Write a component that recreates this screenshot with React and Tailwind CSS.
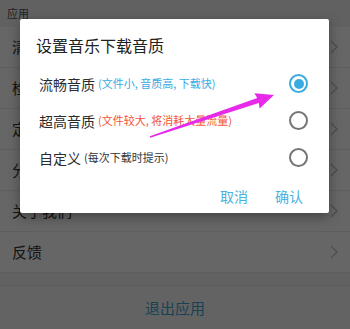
import React from "react";

const rows = ["清除缓存", "检查更新", "定时关闭", "分享应用", "关于我们", "反馈"];

function Chevron() {
  return (
    <svg width="8" height="14" viewBox="0 0 8 14" fill="none">
      <path d="M1 1l6 6-6 6" stroke="#bdbdbd" strokeWidth="1.2" />
    </svg>
  );
}

function Radio({ checked }) {
  return checked ? (
    <div className="w-[19px] h-[19px] rounded-full border-2 border-[#3aaae2] flex items-center justify-center">
      <div className="w-[10px] h-[10px] rounded-full bg-[#3aaae2]" />
    </div>
  ) : (
    <div className="w-[19px] h-[19px] rounded-full border-2 border-[#757575]" />
  );
}

function Option({ label, note, noteColor, checked }) {
  return (
    <div className="h-[37px] flex items-center pl-[19px] pr-[21px]">
      <span className="text-[14px] text-[#2b2b2b] leading-none">{label}</span>
      <span className={"ml-[3px] text-[11px] leading-none " + noteColor}>{note}</span>
      <div className="ml-auto">
        <Radio checked={checked} />
      </div>
    </div>
  );
}

export default function App() {
  return (
    <div
      className="relative w-[350px] h-[329px] overflow-hidden bg-[#f3f3f3]"
      style={{ fontFamily: '"Noto Sans CJK SC", "Noto Sans", sans-serif' }}
    >
      <div className="h-[27px] flex items-center pl-[7px] text-[11px] text-[#555]">应用</div>
      <div className="bg-white">
        {rows.map((r) => (
          <div
            key={r}
            className="h-[41px] flex items-center pl-[12px] pr-[12px] border-b border-[#ececec]"
          >
            <span className="text-[15px] text-[#333]">{r}</span>
            <div className="ml-auto">
              <Chevron />
            </div>
          </div>
        ))}
      </div>
      <div className="h-[12px]" />
      <div className="h-[46px] bg-[#f8f8f8] border-y border-[#e6e6e6] flex items-center justify-center text-[15px] text-[#3aa6d0]">
        退出应用
      </div>

      {/* dim overlay */}
      <div className="absolute inset-0 bg-black/60" />

      {/* dialog */}
      <div className="absolute left-[20px] top-[19px] w-[309px] h-[194px] bg-white rounded-[2px] shadow-[0_4px_12px_rgba(0,0,0,0.35)] flex flex-col">
        <div className="pt-[15px] pl-[16px] h-[46px] text-[16px] leading-[22px] text-[#212121]">
          设置音乐下载音质
        </div>
        <div>
          <Option label="流畅音质" note="(文件小, 音质高, 下载快)" noteColor="text-[#3aaae2]" checked />
          <Option label="超高音质" note="(文件较大, 将消耗大量流量)" noteColor="text-[#f2553a]" />
          <Option label="自定义" note="(每次下载时提示)" noteColor="text-[#333]" />
        </div>
        <div className="flex justify-end gap-[27px] pr-[26px] mt-[10px] text-[14px] leading-[20px] text-[#47b3e0]">
          <span>取消</span>
          <span>确认</span>
        </div>
      </div>

      {/* annotation arrow */}
      <svg className="absolute left-0 top-0" width="350" height="329" viewBox="0 0 350 329">
        <polygon
          points="149.8,136.3 257.2,98.1 254.4,93.2 274,95 259.6,108.4 258.8,102.9 150.2,137.7"
          fill="#e72ae9"
        />
      </svg>
    </div>
  );
}
